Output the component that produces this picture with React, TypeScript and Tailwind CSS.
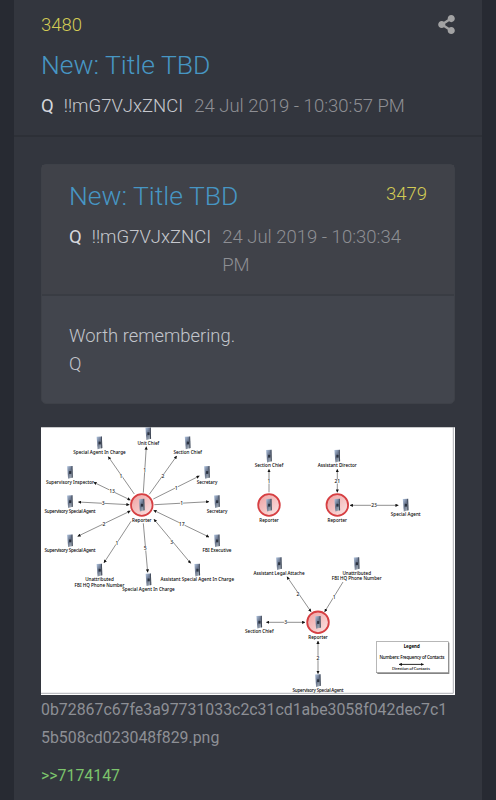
import { FaShareAlt } from 'react-icons/fa';

interface Contact {
  x: number;
  y: number;
  lines: string[];
}

interface Link {
  from: [number, number];
  to: [number, number];
  count: string;
  at: [number, number];
  both?: boolean;
}

const contacts: Contact[] = [
  { x: 107.3, y: 6.5, lines: ['Unit Chief'] },
  { x: 58.5, y: 15.8, lines: ['Special Agent In Charge'] },
  { x: 146.7, y: 15.8, lines: ['Section Chief'] },
  { x: 29, y: 45.3, lines: ['Supervisory Inspector'] },
  { x: 166, y: 45.3, lines: ['Secretary'] },
  { x: 29, y: 74.5, lines: ['Supervisory Special Agent'] },
  { x: 176, y: 74.5, lines: ['Secretary'] },
  { x: 29, y: 113.7, lines: ['Supervisory Special Agent'] },
  { x: 176, y: 113.7, lines: ['FBI Executive'] },
  { x: 58.5, y: 143, lines: ['Unattributed', 'FBI HQ Phone Number'] },
  { x: 156.3, y: 143, lines: ['Assistant Special Agent In Charge'] },
  { x: 107.5, y: 152.7, lines: ['Special Agent In Charge'] },
  { x: 228, y: 29, lines: ['Section Chief'] },
  { x: 296.3, y: 29, lines: ['Assistant Director'] },
  { x: 364.7, y: 78, lines: ['Special Agent'] },
  { x: 238, y: 136.5, lines: ['Assistant Legal Attache'] },
  { x: 315.7, y: 136.5, lines: ['Unattributed', 'FBI HQ Phone Number'] },
  { x: 218.3, y: 195, lines: ['Section Chief'] },
  { x: 277, y: 253.5, lines: ['Supervisory Special Agent'] },
];

const reporters = [
  { x: 100.8, y: 78 },
  { x: 228, y: 78 },
  { x: 296.3, y: 78 },
  { x: 277, y: 195.3 },
];

const links: Link[] = [
  { from: [93.3, 67], to: [67.3, 29.7], count: '1', at: [80, 49] },
  { from: [102.3, 65.7], to: [105.3, 19.7], count: '1', at: [103.7, 43] },
  { from: [108.3, 67.3], to: [135.7, 29], count: '2', at: [122, 49] },
  { from: [112.3, 72], to: [158.3, 49], count: '1', at: [135.3, 61] },
  { from: [113.3, 77.7], to: [168, 74.7], count: '1', at: [140.7, 76.5] },
  { from: [112.7, 83.3], to: [168, 110], count: '17', at: [140.7, 97.3], both: true },
  { from: [113, 92.3], to: [149.7, 136.3], count: '3', at: [130.7, 114.7], both: true },
  { from: [102.3, 96.3], to: [106.7, 145.3], count: '5', at: [104.3, 121.3] },
  { from: [90, 94.3], to: [63, 135.7], count: '1', at: [76, 115.7] },
  { from: [89.3, 84], to: [36.7, 109.3], count: '2', at: [63, 97], both: true },
  { from: [88.3, 77.7], to: [37.3, 75], count: '3', at: [62.3, 76.5], both: true },
  { from: [89.3, 73], to: [52.7, 55.3], count: '13', at: [71, 64.3], both: true },
  { from: [228, 65.3], to: [228, 42.3], count: '1', at: [228, 54.3] },
  { from: [296.3, 65.3], to: [296.3, 42.3], count: '21', at: [296.3, 54.3], both: true },
  { from: [309, 78.3], to: [357.3, 78.3], count: '23', at: [333, 78.3], both: true },
  { from: [270, 184.7], to: [246, 149.7], count: '2', at: [257, 167.3], both: true },
  { from: [302, 155], to: [283.7, 184.7], count: '1', at: [293.3, 170] },
  { from: [264, 195.3], to: [225.3, 195.3], count: '3', at: [244.7, 195.3], both: true },
  { from: [277, 214], to: [277, 246.7], count: '2', at: [277, 231], both: true },
];

function Phone({ x, y }: { x: number; y: number }) {
  return (
    <g transform={`translate(${x} ${y})`}>
      <path d="M-2.9 -6 L2.4 -6.3 L2.8 5.2 L-1.9 6.4 Z" fill="url(#phone)" />
      <path d="M1.6 -6 L2.4 -6.3 L2.8 5.2 L1.7 5.6 Z" fill="#414957" />
      <rect x="-0.9" y="-1.2" width="2.2" height="2.8" fill="#2c3340" />
    </g>
  );
}

function ContactDiagram() {
  return (
    <svg
      viewBox="0 0 414 268"
      className="block h-[268px] w-[414px] bg-white font-['Noto_Sans','Open_Sans',sans-serif] text-[4.6px] font-medium"
    >
      <defs>
        <linearGradient id="phone" x1="0" y1="0" x2="0.8" y2="1">
          <stop offset="0" stopColor="#b4c8e2" />
          <stop offset="0.5" stopColor="#66728a" />
          <stop offset="1" stopColor="#b0b9c0" />
        </linearGradient>
        <linearGradient id="ring" x1="0" y1="0" x2="1" y2="1">
          <stop offset="0" stopColor="#ee9f9f" />
          <stop offset="1" stopColor="#fbe6e6" />
        </linearGradient>
        <marker id="head" viewBox="0 0 4 4" refX="3.6" refY="2" markerWidth="3.4" markerHeight="3.2" markerUnits="userSpaceOnUse" orient="auto-start-reverse">
          <path d="M0 0 L4 2 L0 4 Z" fill="#111" />
        </marker>
      </defs>

      {links.map((l, i) => (
        <g key={i}>
          <line
            x1={l.from[0]}
            y1={l.from[1]}
            x2={l.to[0]}
            y2={l.to[1]}
            stroke="#444"
            strokeWidth="0.6"
            markerEnd="url(#head)"
            markerStart={l.both ? 'url(#head)' : undefined}
          />
          <rect x={l.at[0] - l.count.length * 1.4} y={l.at[1] - 2.2} width={l.count.length * 2.8} height="4.4" fill="#fff" />
          <text x={l.at[0]} y={l.at[1] + 1.8} textAnchor="middle" fontSize="5" fill="#111">
            {l.count}
          </text>
        </g>
      ))}

      {reporters.map((r, i) => (
        <g key={i}>
          <circle cx={r.x} cy={r.y} r="10.8" fill="url(#ring)" stroke="#d63f42" strokeWidth="1.8" />
          <Phone x={r.x} y={r.y} />
          <text x={r.x} y={r.y + 16.8} textAnchor="middle" fill="#000">
            Reporter
          </text>
        </g>
      ))}

      {contacts.map((c, i) => (
        <g key={i}>
          <Phone x={c.x} y={c.y} />
          {c.lines.map((line, n) => (
            <text
              key={line}
              x={c.x}
              y={c.y + 11.4 + n * 5.4}
              textAnchor="middle"
              textLength={line === 'Supervisory Special Agent' ? 51 : undefined}
              fill="#000"
            >
              {line}
            </text>
          ))}
        </g>
      ))}

      <rect x="336.3" y="215.7" width="72" height="31.2" fill="#777" />
      <rect x="335.5" y="214.7" width="71.8" height="31" fill="#fff" stroke="#888" strokeWidth="0.6" />
      <text x="370.7" y="220.5" textAnchor="middle" fontSize="4.4" fontWeight="700" fill="#000">
        Legend
      </text>
      <text x="371" y="231.8" textAnchor="middle" textLength="65" fill="#000">
        Numbers: Frequency of Contacts
      </text>
      <line x1="358" y1="237.4" x2="382.5" y2="237.4" stroke="#111" strokeWidth="0.9" markerStart="url(#head)" markerEnd="url(#head)" />
      <text x="370" y="243.4" textAnchor="middle" textLength="38" fontSize="4.2" fill="#000">
        Direction of Contacts
      </text>

      <path d="M412.3 0 V266.3 H0" fill="none" stroke="#aeb0b4" strokeWidth="1" />
      <path d="M0 0.3 H414" stroke="#8b8d92" strokeWidth="0.6" />
    </svg>
  );
}

function Meta({ date }: { date: string }) {
  return (
    <div className="flex text-[18.5px] leading-7">
      <span className="mr-[10px] font-normal text-[#d5d7dc]">Q</span>
      <span className="mr-[11px] text-[#c6c8ce]">!!mG7VJxZNCI</span>
      <span className="text-[#8e8f94]">{date}</span>
    </div>
  );
}

export default function App() {
  return (
    <div className="h-[800px] w-[496px] overflow-hidden bg-[#272a32] px-[14px] font-[Roboto,sans-serif] font-light">
      <article className="h-full bg-[#33363e]">
        <header className="h-[137px] border-b-2 border-[#2d3037] px-[27px] pt-[11px]">
          <div className="flex items-center justify-between text-[18.5px] leading-7 text-[#d2cb55]">
            <span>3480</span>
            <FaShareAlt className="-mt-[2px] h-[19px] w-[17px] text-[#a2a2a3]" />
          </div>
          <h2 className="mt-[8px] text-[26.5px] leading-9 text-[#4796c4]">New: Title TBD</h2>
          <div className="mt-[9px]">
            <Meta date="24 Jul 2019 - 10:30:57 PM" />
          </div>
        </header>

        <div className="px-[27px] pt-[27px]">
          <section className="h-[240px] w-[414px] rounded-[5px] border border-[#3e4148] bg-[#42454d]">
            <div className="h-[131px] border-b-2 border-[#393c43] bg-[#404249] px-[27px] pt-[13px]">
              <div className="flex items-start justify-between">
                <h2 className="text-[26.5px] leading-9 text-[#4796c4]">New: Title TBD</h2>
                <span className="mt-[2px] text-[18.5px] leading-7 text-[#d2cb55]">3479</span>
              </div>
              <div className="mt-[9px]">
                <Meta date="24 Jul 2019 - 10:30:34 PM" />
              </div>
            </div>
            <div className="px-[27px] pt-[26px] text-[18.4px] leading-7 text-[#c3c6cc]">
              <p>Worth remembering.</p>
              <p>Q</p>
            </div>
          </section>

          <figure className="mt-[23px]">
            <ContactDiagram />
            <figcaption className="pt-px text-[15.87px] leading-7 font-normal text-[#8d8f95]">
              <div>0b72867c67fe3a97731033c2c31cd1abe3058f042dec7c1</div>
              <div>5b508cd023048f829.png</div>
            </figcaption>
          </figure>
          <a className="mt-[10px] block text-[15.87px] leading-7 font-normal text-[#7cc46c]">&gt;&gt;7174147</a>
        </div>
      </article>
    </div>
  );
}
